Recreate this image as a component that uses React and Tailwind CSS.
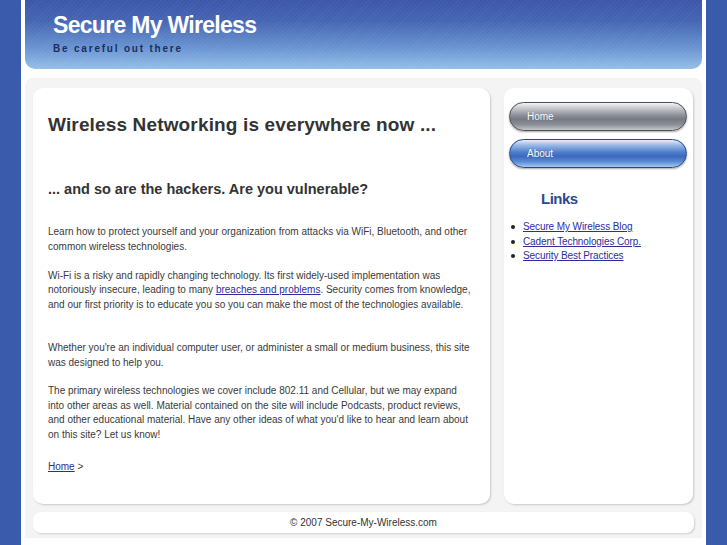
export default function App() {
  const pillGray =
    "bg-[linear-gradient(to_bottom,#f4f4f6_0%,#c9cbd0_18%,#8e9199_45%,#767a83_60%,#8a8e96_80%,#c4c7cc_100%)] border border-[#4d4f55]";
  const pillBlue =
    "bg-[linear-gradient(to_bottom,#e6effa_0%,#9dbbe6_18%,#4f7fca_45%,#3b69bd_60%,#5a8ad3_80%,#a6c8ee_100%)] border border-[#24458f]";
  return (
    <div
      className="min-h-[545px] bg-[#3a5aab] px-[21px]"
      style={{ fontFamily: '"Liberation Sans", Arial, sans-serif' }}
    >
      <div className="bg-white px-[4px] pb-[7px] h-[545px] flex flex-col">
        {/* Header */}
        <div className="h-[69px] rounded-b-[10px] bg-[repeating-linear-gradient(135deg,rgba(255,255,255,0.04)_0px,rgba(255,255,255,0.04)_1px,rgba(0,0,0,0)_1px,rgba(0,0,0,0)_3px),linear-gradient(to_bottom,#3d56a9_0%,#4565b3_30%,#6a95d2_70%,#96bfe8_100%)] pl-[28px] pt-[11px]">
          <div className="text-white font-bold text-[23px] leading-[28px] tracking-[-0.7px]">
            Secure My Wireless
          </div>
          <div className="text-[#1d2d60] font-bold text-[10px] leading-[12px] tracking-[1.8px] mt-[4px]">
            Be careful out there
          </div>
        </div>

        {/* Grey panel */}
        <div className="mt-[9px] flex-1 bg-[#f4f4f4] rounded-t-[8px] px-[8px] pt-[10px] pb-[5px] flex flex-col">
          <div className="flex gap-[14px] h-[416px]">
            {/* Main card */}
            <div className="w-[457px] bg-white rounded-[10px] shadow-[1px_1px_2px_rgba(0,0,0,0.18)] px-[15px] pt-[26px] text-[#333]">
              <h1 className="font-bold text-[19px] leading-[22px] tracking-[0.15px]">
                Wireless Networking is everywhere now ...
              </h1>
              <h2 className="font-bold text-[14.5px] leading-[18px] mt-[44px]">
                ... and so are the hackers. Are you vulnerable?
              </h2>
              <div className="text-[10px] leading-[14.5px] text-[#3a3a3a]">
                <p className="mt-[27px]">
                  Learn how to protect yourself and your organization from attacks via WiFi, Bluetooth, and other common wireless technologies.
                </p>
                <p className="mt-[14.5px]">
                  Wi-Fi is a risky and rapidly changing technology. Its first widely-used implementation was notoriously insecure, leading to many{" "}
                  <a href="#" className="text-[#2d2d9f] underline">breaches and problems</a>. Security comes from knowledge, and our first priority is to educate you so you can make the most of the technologies available.
                </p>
                <p className="mt-[29px]">
                  Whether you're an individual computer user, or administer a small or medium business, this site was designed to help you.
                </p>
                <p className="mt-[14px]">
                  The primary wireless technologies we cover include 802.11 and Cellular, but we may expand into other areas as well. Material contained on the site will include Podcasts, product reviews, and other educational material. Have any other ideas of what you'd like to hear and learn about on this site? Let us know!
                </p>
                <p className="mt-[18px]">
                  <a href="#" className="text-[#2d2d9f] underline">Home</a> &gt;
                </p>
              </div>
            </div>

            {/* Sidebar */}
            <div className="w-[189px] bg-white rounded-[10px] shadow-[1px_1px_2px_rgba(0,0,0,0.18)] pl-[5px] pr-[6px] pt-[14px]">
              <div className={`h-[29px] rounded-full ${pillGray} shadow-[0_1px_2px_rgba(0,0,0,0.35)] flex items-center pl-[17px] text-white text-[10px] [text-shadow:0_0_1px_rgba(0,0,0,0.3)]`}>
                Home
              </div>
              <div className={`h-[29px] mt-[8px] rounded-full ${pillBlue} shadow-[0_1px_2px_rgba(0,0,0,0.35)] flex items-center pl-[17px] text-white text-[10px] [text-shadow:0_0_1px_rgba(0,0,0,0.3)]`}>
                About
              </div>
              <h3 className="mt-[22px] ml-[32px] font-bold text-[15px] leading-[18px] tracking-[-0.5px] text-[#2c4b8e]">
                Links
              </h3>
              <ul className="mt-[12px] text-[10px] leading-[14.5px] tracking-[-0.1px]">
                {["Secure My Wireless Blog", "Cadent Technologies Corp.", "Security Best Practices"].map((t) => (
                  <li key={t} className="flex items-center">
                    <span className="w-[14px] flex justify-start pl-[2px]">
                      <span className="w-[4px] h-[4px] rounded-full bg-[#222]"></span>
                    </span>
                    <a href="#" className="text-[#2d2d9f] underline">{t}</a>
                  </li>
                ))}
              </ul>
            </div>
          </div>

          {/* Footer */}
          <div className="mt-[8px] w-[661px] h-[21px] bg-white rounded-[8px] shadow-[1px_1px_2px_rgba(0,0,0,0.15)] flex items-center justify-center text-[10px] text-[#333]">
            © 2007 Secure-My-Wireless.com
          </div>
        </div>
      </div>
    </div>
  );
}
